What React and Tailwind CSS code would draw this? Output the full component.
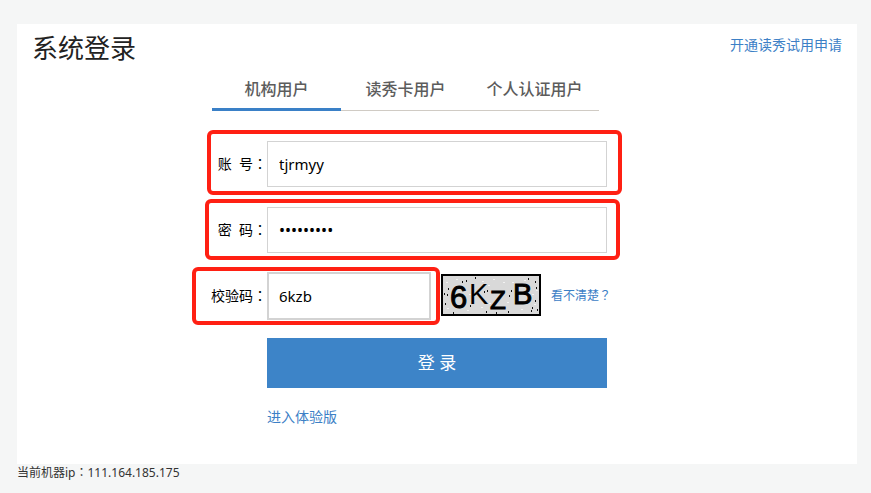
import { useState } from 'react'

const tabs = ['机构用户', '读秀卡用户', '个人认证用户']

const captchaGlyphs = [
  { char: '6', x: 9, y: 34, size: 31, stroke: 1 },
  { char: 'K', x: 28, y: 30, size: 29, stroke: 0 },
  { char: 'Z', x: 49, y: 35, size: 26, stroke: 1 },
  { char: 'B', x: 72, y: 30, size: 29, stroke: 1 },
]

const captchaDots = [
  [3, 19], [7, 14], [6, 20], [21, 7], [25, 6], [29, 31], [43, 17], [46, 16], [34, 3],
  [45, 37], [55, 38], [67, 37], [70, 16], [87, 4], [94, 7], [95, 13], [91, 33], [94, 26],
  [90, 36], [96, 35], [12, 38], [68, 21], [4, 29],
]

const captchaSpecks = [
  [15, 5], [22, 13], [28, 20], [41, 7], [47, 11], [48, 29], [40, 33], [62, 8], [66, 28], [71, 8],
  [80, 35], [91, 20], [95, 16], [93, 30], [5, 8], [6, 34], [26, 36], [52, 5], [60, 19], [83, 6],
]

function Captcha() {
  return (
    <svg width="100" height="42" viewBox="0 0 100 42" role="img" aria-label="校验码" className="shrink-0">
      <rect x="1" y="1" width="98" height="40" fill="#d9d9d9" stroke="#000" strokeWidth="2" />
      {captchaSpecks.map(([x, y]) => (
        <rect key={`${x}-${y}`} x={x} y={y} width="2" height="1" fill="#f2f2f2" />
      ))}
      {captchaDots.map(([x, y]) => (
        <rect key={`${x}-${y}`} x={x} y={y} width="1" height="2" fill="#111" />
      ))}
      {captchaGlyphs.map((g) => (
        <text
          key={g.char}
          x={g.x}
          y={g.y}
          fontSize={g.size}
          fill="#000"
          stroke="#000"
          strokeWidth={g.stroke}
          fontFamily="'Liberation Sans', sans-serif"
        >
          {g.char}
        </text>
      ))}
    </svg>
  )
}

// full-width punctuation, centred in its cell
function Mark({ children }) {
  return <span lang="zh-TW" className="font-['Noto_Sans_CJK_TC',sans-serif]">{children}</span>
}

function Highlight({ className }) {
  return <span className={`pointer-events-none absolute rounded-md border-4 border-[#ff2013] ${className}`} />
}

function FormRow({ id, label, children }) {
  return (
    <div className="grid grid-cols-[1fr_340px_1fr] items-center">
      <label htmlFor={id} className="justify-self-end whitespace-pre pb-px text-sm text-black">
        {label}<Mark>：</Mark>
      </label>
      {children}
    </div>
  )
}

export default function App() {
  const [active, setActive] = useState(0)

  return (
    <div
      lang="zh-CN"
      className="min-h-screen bg-[#f5f6f6] pt-6 pr-[14px] pl-[17px] font-['Noto_Sans','Noto_Sans_CJK_SC',sans-serif]"
    >
      <main className="bg-white pb-[36px]">
        <header className="flex items-start justify-between px-[15px] pt-2">
          <h1 className="text-[26px] leading-8 text-[#222]">系统登录</h1>
          <a href="#apply" className="pt-[3px] text-sm text-[#3c80c6]">开通读秀试用申请</a>
        </header>

        <div className="flex justify-center pr-[63px]">
          <div role="tablist" className="grid w-[387px] grid-cols-3 border-b border-[#d0cbc4]">
            {tabs.map((tab, i) => (
              <button
                key={tab}
                type="button"
                role="tab"
                aria-selected={i === active}
                onClick={() => setActive(i)}
                className={`-mb-px h-[47px] border-b-[3px] pt-[6px] text-base font-medium text-[#5c5c5c] ${i === active ? 'border-[#3a80c7]' : 'border-transparent'}`}
              >
                {tab}
              </button>
            ))}
          </div>
        </div>

        <form className="mt-[30px]" onSubmit={(e) => e.preventDefault()}>
          <div className="space-y-5">
            <FormRow id="account" label={'账\u00a0\u00a0号'}>
              <div className="relative">
                <input id="account" type="text" defaultValue="tjrmyy" className="block h-[46px] w-full border border-[#d3d3d3] px-[11px] text-[15px] text-black outline-none" />
                <Highlight className="-top-[11px] -right-[15px] -bottom-2 -left-[60px]" />
              </div>
            </FormRow>
            <FormRow id="password" label={'密\u00a0\u00a0码'}>
              <div className="relative">
                <input id="password" type="password" defaultValue="123456789" className="block h-[46px] w-full border border-[#d3d3d3] px-[11px] text-base text-black outline-none" />
                <Highlight className="-top-2 -right-[13px] -bottom-[7px] -left-[62px]" />
              </div>
            </FormRow>
          </div>

          <div className="mt-[19px]">
            <FormRow id="code" label="校验码">
              <div className="flex items-start gap-[10px]">
                <div className="relative shrink-0">
                  <input id="code" type="text" defaultValue="6kzb" className="block h-[48px] w-[164px] border-2 border-[#d3d3d3] px-[10px] text-[15px] text-black outline-none" />
                  <Highlight className="-top-[5px] -right-[9px] -bottom-[5px] -left-[75px]" />
                </div>
                <div className="flex items-center gap-[10px] pt-[2px]">
                  <Captcha />
                  <a href="#refresh" className="whitespace-nowrap text-xs text-[#3c80c6]">看不清楚<Mark>？</Mark></a>
                </div>
              </div>
            </FormRow>
          </div>

          <div className="mx-auto mt-[18px] w-[340px]">
            <button type="submit" className="block h-[50px] w-full bg-[#3d84c8] text-[17px] text-white">登 录</button>
            <a href="#trial" className="mt-[19px] inline-block text-sm text-[#3c80c6]">进入体验版</a>
          </div>
        </form>
      </main>
      <footer className="text-xs text-[#333]">当前机器ip<Mark>：</Mark>111.164.185.175</footer>
    </div>
  )
}
